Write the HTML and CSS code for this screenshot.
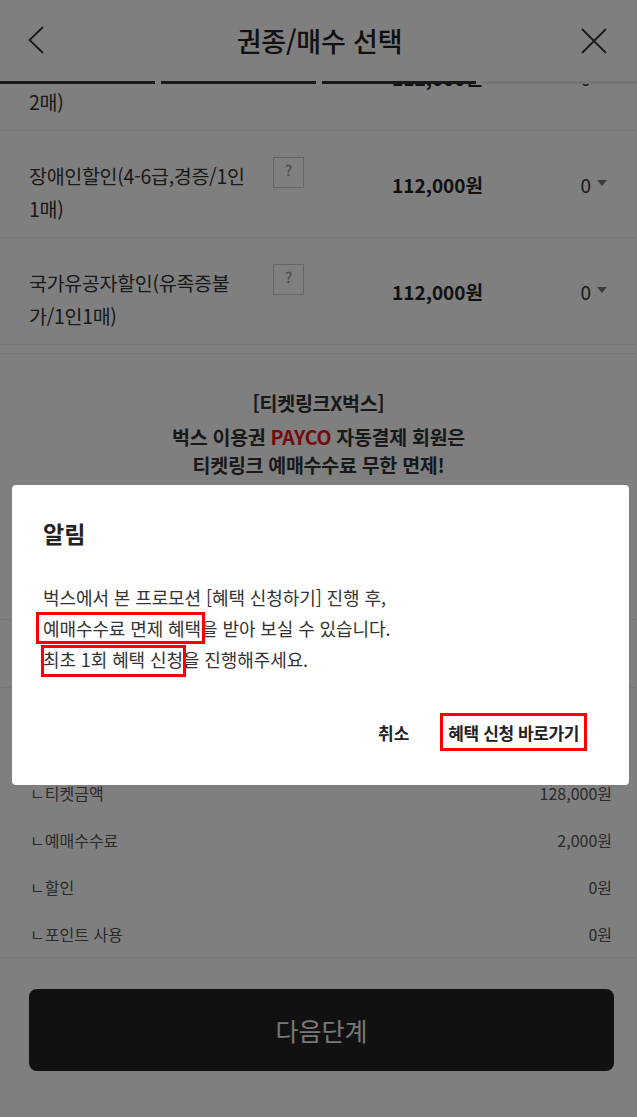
FILE: index.html
```html
<!DOCTYPE html>
<html lang="ko">
<head>
<meta charset="utf-8">
<title>권종/매수 선택</title>
<link rel="stylesheet" href="styles.css">
</head>
<body>
<div class="page">
  <header class="top">
    <div class="bar">
      <button class="icon-btn back" type="button" aria-label="뒤로">
        <svg width="16" height="28" viewBox="0 0 16 28"><polyline points="15,1 1.5,14 15,27" fill="none" stroke="#333" stroke-width="1.8"/></svg>
      </button>
      <h1 class="title">권종/매수 선택</h1>
      <button class="icon-btn close" type="button" aria-label="닫기">
        <svg width="26" height="26" viewBox="0 0 26 26"><path d="M1 1L25 25M25 1L1 25" fill="none" stroke="#333" stroke-width="1.8"/></svg>
      </button>
    </div>
    <div class="steps">
      <span class="step on"></span><span class="step on"></span><span class="step on"></span><span class="step"></span>
    </div>
  </header>

  <main class="content">
    <ul class="tickets">
      <li class="ticket">
        <div class="t-name cut">2매)</div>
        <span class="price">112,000원</span>
        <span class="qty">0<i class="caret"></i></span>
      </li>
      <li class="ticket">
        <div class="t-name">장애인할인(4-6급,경증/1인<br>1매)</div>
        <span class="help">?</span>
        <span class="price">112,000원</span>
        <span class="qty">0<i class="caret"></i></span>
      </li>
      <li class="ticket">
        <div class="t-name">국가유공자할인(유족증불<br>가/1인1매)</div>
        <span class="help">?</span>
        <span class="price">112,000원</span>
        <span class="qty">0<i class="caret"></i></span>
      </li>
    </ul>

    <section class="promo">
      <p class="promo-head">[티켓링크X벅스]</p>
      <p class="promo-text">벅스 이용권 <em>PAYCO</em> 자동결제 회원은<br>티켓링크 예매수수료 무한 면제!</p>
    </section>

    <section class="pay-block coupon"></section>
    <section class="pay-block total"></section>

    <ul class="summary">
      <li class="sum-row"><span>ㄴ티켓금액</span><span>128,000원</span></li>
      <li class="sum-row"><span>ㄴ예매수수료</span><span>2,000원</span></li>
      <li class="sum-row"><span>ㄴ할인</span><span>0원</span></li>
      <li class="sum-row"><span>ㄴ포인트 사용</span><span>0원</span></li>
    </ul>

    <div class="cta">
      <button class="next" type="button">다음단계</button>
    </div>
  </main>
</div>

<div class="dim">
  <div class="modal" role="dialog">
    <h2 class="modal-title">알림</h2>
    <p class="modal-body">벅스에서 본 프로모션 [혜택 신청하기] 진행 후,<br><span class="mark mark-a">예매수수료 면제 혜택</span>을 받아 보실 수 있습니다.<br><span class="mark mark-b">최초 1회 혜택 신청</span>을 진행해주세요.</p>
    <div class="actions">
      <button class="act cancel" type="button">취소</button>
      <button class="act go" type="button">혜택 신청 바로가기</button>
    </div>
  </div>
</div>
</body>
</html>
```

FILE: styles.css
```css
* {
  box-sizing: border-box;
  margin: 0;
  padding: 0;
}

html,
body {
  width: 637px;
  height: 1117px;
  overflow: hidden;
}

body {
  font-family: "Noto Sans CJK KR", "Noto Sans", sans-serif;
  color: #333;
  background: #fff;
}

ul {
  list-style: none;
}

button {
  font-family: inherit;
  border: 0;
  background: none;
  cursor: pointer;
}

/* header */
.top {
  position: relative;
  z-index: 2;
  background: #fff;
}

.bar {
  height: 81px;
  display: grid;
  grid-template-columns: 1fr auto 1fr;
  align-items: center;
  padding: 0 30px 0 28px;
}

.icon-btn {
  display: flex;
}

.back {
  justify-self: start;
  margin-top: -2px;
}

.close {
  justify-self: end;
}

.title {
  font-size: 27px;
  font-weight: 500;
  color: #222;
  margin-left: 4px;
  letter-spacing: -0.2px;
}

.steps {
  display: grid;
  grid-template-columns: repeat(4, 1fr);
  gap: 6px;
  height: 3px;
}

.step {
  background: #ebebeb;
}

.step.on {
  background: #333;
}

/* content */
.content {
  position: relative;
  z-index: 1;
  margin-top: -60px;
}

.ticket {
  display: flex;
  align-items: center;
  height: 107px;
  border-bottom: 1px solid #eee;
  padding: 0 30px 0 29px;
}

.t-name {
  width: 236px;
  flex: none;
  font-size: 19.5px;
  line-height: 33px;
  margin-top: 16px;
  color: #333;
  white-space: nowrap;
  letter-spacing: -0.3px;
}

.t-name.cut {
  padding-top: 33px;
}

.help {
  align-self: flex-start;
  margin-top: 26px;
  margin-left: 8px;
  width: 31px;
  height: 31px;
  border: 1px solid #ccc;
  font-size: 15px;
  line-height: 24px;
  color: #888;
  text-align: center;
}

.price {
  flex: 1;
  text-align: right;
  font-size: 19px;
  font-weight: 700;
  color: #222;
}

.qty {
  width: 124px;
  flex: none;
  display: flex;
  justify-content: flex-end;
  align-items: center;
  gap: 6px;
  font-size: 19px;
  color: #333;
}

.caret {
  width: 0;
  height: 0;
  border-left: 5px solid transparent;
  border-right: 5px solid transparent;
  border-top: 6px solid #777;
  margin-top: -2px;
}

/* promo */
.promo {
  margin-top: 8px;
  height: 267px;
  border-top: 1px solid #eee;
  border-bottom: 1px solid #eee;
  padding-top: 34px;
  text-align: center;
  font-weight: 700;
  font-size: 19.5px;
  color: #333;
  letter-spacing: -0.3px;
}

.promo-head {
  line-height: 30px;
}

.promo-text {
  margin-top: 5px;
  line-height: 28px;
}

.promo-text em {
  font-style: normal;
  color: #e8141e;
}

.pay-block {
  border-bottom: 1px solid #eee;
}

.coupon {
  height: 68px;
}

.total {
  height: 81px;
  border-bottom: 0;
}

/* summary */
.summary {
  border-bottom: 1px solid #eee;
}

.sum-row {
  height: 47px;
  display: flex;
  justify-content: space-between;
  align-items: center;
  padding: 0 25px 0 30px;
  font-size: 16px;
  color: #555;
}

.cta {
  padding: 31px 23px 0 29px;
}

.next {
  display: block;
  width: 100%;
  height: 82px;
  border-radius: 8px;
  background: #222;
  color: #eee;
  font-size: 25px;
}

/* dialog */
.dim {
  position: fixed;
  inset: 0;
  z-index: 10;
  background: rgba(0, 0, 0, 0.5);
  padding: 485px 8px 0 12px;
}

.modal {
  height: 300px;
  background: #fff;
  border-radius: 4px;
  padding: 32px 42px 0 31px;
}

.modal-title {
  font-size: 23px;
  font-weight: 700;
  line-height: 32px;
  color: #222;
}

.modal-body {
  margin-top: 33px;
  font-size: 18px;
  line-height: 31px;
  color: #333;
  white-space: nowrap;
  letter-spacing: -0.1px;
}

.mark {
  position: relative;
}

.mark::after {
  content: "";
  position: absolute;
  border: 3px solid #f00;
  pointer-events: none;
}

.mark-a::after {
  left: -7px;
  right: -4px;
  top: -3px;
  bottom: -3px;
}

.mark-b::after {
  left: -2px;
  right: -3px;
  top: -1px;
  bottom: -5px;
}

.actions {
  margin-top: 38px;
  display: flex;
  justify-content: flex-end;
  align-items: center;
  gap: 31px;
}

.act {
  font-size: 17px;
  font-weight: 700;
  color: #222;
  height: 38px;
}

.go {
  border: 3px solid #f00;
  padding: 0 5px;
  letter-spacing: -0.4px;
}
```
